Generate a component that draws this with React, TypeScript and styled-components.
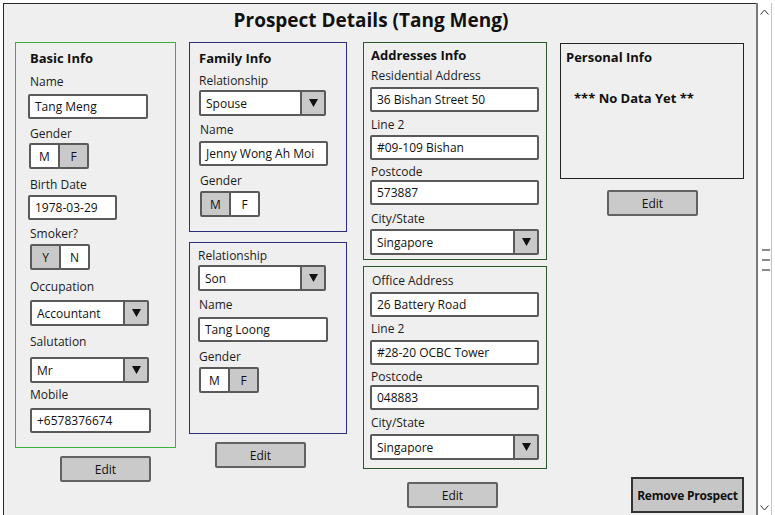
import React from "react";
import styled, { createGlobalStyle } from "styled-components";

const GlobalStyle = createGlobalStyle`
  html, body { margin: 0; padding: 0; background: #ffffff; }
  body {
    font-family: "Open Sans", "DejaVu Sans", sans-serif;
    color: #1c1c1c;
    overflow: hidden;
  }
  * { box-sizing: border-box; }
`;

const Window = styled.div`
  margin: 3px 0 0 3px;
  width: 769px;
  height: 512px;
  display: flex;
  border-top: 1px solid #2b2b2b;
  border-left: 1px solid #2b2b2b;
  background: #efefef;
`;

const Main = styled.div`
  flex: 1;
  min-width: 0;
  display: flex;
  flex-direction: column;
`;

const Title = styled.h1`
  margin: 4px 18px 0 0;
  font-size: 19px;
  line-height: 24px;
  font-weight: 700;
  text-align: center;
  color: #111;
`;

const Columns = styled.div`
  display: flex;
  align-items: flex-start;
  margin-top: 10px;
  padding-left: 11px;
`;

const Column = styled.div<{ $w: number; $ml?: number; $mt?: number }>`
  flex: none;
  width: ${(p) => p.$w}px;
  margin-left: ${(p) => p.$ml ?? 0}px;
  margin-top: ${(p) => p.$mt ?? 0}px;
  display: flex;
  flex-direction: column;
  align-items: flex-start;
`;

const Panel = styled.section<{
  $color: string;
  $h?: number;
  $pt: number;
  $pl: number;
  $pb?: number;
  $mt?: number;
}>`
  width: 100%;
  height: ${(p) => (p.$h ? `${p.$h}px` : "auto")};
  margin-top: ${(p) => p.$mt ?? 0}px;
  border: 1px solid ${(p) => p.$color};
  padding: ${(p) => p.$pt}px 0 ${(p) => p.$pb ?? 0}px ${(p) => p.$pl}px;
  display: flex;
  flex-direction: column;
  align-items: flex-start;
`;

const Heading = styled.h2<{ $indent?: number }>`
  margin: 0;
  padding-left: ${(p) => p.$indent ?? 0}px;
  font-size: 13px;
  line-height: 16px;
  font-weight: 700;
  color: #111;
`;

const Field = styled.div<{ $mt: number; $lg: number }>`
  margin-top: ${(p) => p.$mt}px;
  display: flex;
  flex-direction: column;
  align-items: flex-start;
  gap: ${(p) => p.$lg}px;
`;

const Label = styled.div<{ $indent?: number }>`
  padding-left: ${(p) => p.$indent ?? 0}px;
  font-size: 12px;
  line-height: 16px;
  color: #1c1c1c;
`;

const TextBox = styled.div<{ $w: number; $indent?: number }>`
  width: ${(p) => p.$w}px;
  height: 25px;
  margin-left: ${(p) => p.$indent ?? 0}px;
  background: #ffffff;
  border: 2px solid #5a5a5a;
  border-radius: 2px;
  padding-left: 5px;
  display: flex;
  align-items: center;
  font-size: 12px;
  color: #111;
  white-space: nowrap;
`;

const SelectBox = styled.div<{ $w: number; $indent?: number }>`
  width: ${(p) => p.$w}px;
  height: 26px;
  margin-left: ${(p) => p.$indent ?? 0}px;
  background: #ffffff;
  border: 2px solid #5a5a5a;
  border-radius: 2px;
  display: flex;
  align-items: stretch;
  font-size: 12px;
  color: #111;
`;

const SelectValue = styled.div`
  flex: 1;
  padding-left: 5px;
  display: flex;
  align-items: center;
  white-space: nowrap;
`;

const SelectArrow = styled.div`
  flex: none;
  width: 24px;
  background: #c9c9c9;
  border-left: 2px solid #5a5a5a;
  display: flex;
  align-items: center;
  justify-content: center;
`;

const ToggleGroup = styled.div<{ $indent?: number }>`
  display: flex;
  margin-left: ${(p) => p.$indent ?? 0}px;
`;

const ToggleBtn = styled.div<{ $on: boolean }>`
  width: 31px;
  height: 26px;
  border: 2px solid #5a5a5a;
  border-radius: 2px;
  background: ${(p) => (p.$on ? "#c9c9c9" : "#ffffff")};
  display: flex;
  align-items: center;
  justify-content: center;
  font-size: 12px;
  color: #111;
  & + & {
    margin-left: -2px;
  }
`;

const EmptyNote = styled.div<{ $mt: number; $indent: number }>`
  margin-top: ${(p) => p.$mt}px;
  padding-left: ${(p) => p.$indent}px;
  font-size: 13px;
  line-height: 16px;
  font-weight: 700;
  color: #111;
`;

const Button = styled.button<{ $ml: number; $mt: number }>`
  width: 91px;
  height: 26px;
  margin: ${(p) => p.$mt}px 0 0 ${(p) => p.$ml}px;
  padding: 0;
  background: #cacaca;
  border: 2px solid #626262;
  border-radius: 2px;
  font-family: inherit;
  font-size: 12px;
  color: #111;
`;

const DangerButton = styled.button`
  width: 113px;
  height: 36px;
  margin: 261px 0 0 71px;
  padding: 0;
  background: #c6c6c6;
  border: 2px solid #333333;
  font-family: inherit;
  font-size: 12px;
  font-weight: 700;
  letter-spacing: -0.2px;
  color: #111;
`;

const Scrollbar = styled.div`
  flex: none;
  width: 16px;
  margin-top: -1px;
  background: #ffffff;
  border-left: 2px solid #7a7a7a;
  border-right: 1px solid #c4c4c4;
  display: flex;
  flex-direction: column;
  align-items: center;
  justify-content: space-between;
  padding: 6px 0 4px;
`;

const Grip = styled.div`
  display: flex;
  flex-direction: column;
  gap: 8px;
  margin-left: 2px;
`;

const GripLine = styled.div`
  width: 8px;
  height: 2px;
  background: #8a8a8a;
`;

const Arrow = () => (
  <svg width="9" height="8" viewBox="0 0 9 8">
    <polygon points="0,0 9,0 4.5,8" fill="#111" />
  </svg>
);

const Chevron = ({ up }: { up?: boolean }) => (
  <svg width="9" height="6" viewBox="0 0 9 6">
    <polyline
      points={up ? "0.5,5.5 4.5,1 8.5,5.5" : "0.5,0.5 4.5,5 8.5,0.5"}
      fill="none"
      stroke="#333"
      strokeWidth="1"
    />
  </svg>
);

const Select = ({ value, w, indent }: { value: string; w: number; indent?: number }) => (
  <SelectBox $w={w} $indent={indent}>
    <SelectValue>{value}</SelectValue>
    <SelectArrow>
      <Arrow />
    </SelectArrow>
  </SelectBox>
);

const Toggle = ({ a, b, on, indent }: { a: string; b: string; on: 0 | 1; indent?: number }) => (
  <ToggleGroup $indent={indent}>
    <ToggleBtn $on={on === 0}>{a}</ToggleBtn>
    <ToggleBtn $on={on === 1}>{b}</ToggleBtn>
  </ToggleGroup>
);

const BLUE = "#2d2d78";
const GREEN = "#3bb03b";
const DARK_GREEN = "#2c572c";

export default function App() {
  return (
    <>
      <GlobalStyle />
      <Window>
        <Main>
          <Title>Prospect Details (Tang Meng)</Title>
          <Columns>
            <Column $w={161}>
              <Panel $color={GREEN} $pt={7} $pl={12} $pb={14}>
                <Heading $indent={2}>Basic Info</Heading>
                <Field $mt={8} $lg={4}>
                  <Label $indent={2}>Name</Label>
                  <TextBox $w={120}>Tang Meng</TextBox>
                </Field>
                <Field $mt={7} $lg={1}>
                  <Label $indent={2}>Gender</Label>
                  <Toggle a="M" b="F" on={1} indent={1} />
                </Field>
                <Field $mt={8} $lg={2}>
                  <Label $indent={2}>Birth Date</Label>
                  <TextBox $w={89}>1978-03-29</TextBox>
                </Field>
                <Field $mt={6} $lg={2}>
                  <Label $indent={2}>Smoker?</Label>
                  <Toggle a="Y" b="N" on={0} indent={2} />
                </Field>
                <Field $mt={9} $lg={5}>
                  <Label $indent={2}>Occupation</Label>
                  <Select value="Accountant" w={119} indent={2} />
                </Field>
                <Field $mt={8} $lg={7}>
                  <Label $indent={2}>Salutation</Label>
                  <Select value="Mr" w={119} indent={2} />
                </Field>
                <Field $mt={4} $lg={5}>
                  <Label $indent={2}>Mobile</Label>
                  <TextBox $w={121} $indent={2}>+6578376674</TextBox>
                </Field>
              </Panel>
              <Button $ml={45} $mt={8}>Edit</Button>
            </Column>

            <Column $w={158} $ml={13}>
              <Panel $color={BLUE} $h={190} $pt={7} $pl={9}>
                <Heading>Family Info</Heading>
                <Field $mt={7} $lg={1}>
                  <Label>Relationship</Label>
                  <Select value="Spouse" w={127} />
                </Field>
                <Field $mt={6} $lg={3}>
                  <Label $indent={1}>Name</Label>
                  <TextBox $w={129}>Jenny Wong Ah Moi</TextBox>
                </Field>
                <Field $mt={7} $lg={2}>
                  <Label $indent={1}>Gender</Label>
                  <Toggle a="M" b="F" on={0} indent={1} />
                </Field>
              </Panel>
              <Panel $color={BLUE} $h={192} $mt={10} $pt={5} $pl={8}>
                <Field $mt={0} $lg={1}>
                  <Label>Relationship</Label>
                  <Select value="Son" w={128} />
                </Field>
                <Field $mt={6} $lg={4}>
                  <Label $indent={1}>Name</Label>
                  <TextBox $w={130}>Tang Loong</TextBox>
                </Field>
                <Field $mt={7} $lg={2}>
                  <Label $indent={1}>Gender</Label>
                  <Toggle a="M" b="F" on={1} indent={1} />
                </Field>
              </Panel>
              <Button $ml={26} $mt={8}>Edit</Button>
            </Column>

            <Column $w={184} $ml={16}>
              <Panel $color={DARK_GREEN} $pt={4} $pl={6} $pb={4}>
                <Heading $indent={1}>Addresses Info</Heading>
                <Field $mt={5} $lg={3}>
                  <Label $indent={1}>Residential Address</Label>
                  <TextBox $w={169}>36 Bishan Street 50</TextBox>
                </Field>
                <Field $mt={5} $lg={2}>
                  <Label $indent={1}>Line 2</Label>
                  <TextBox $w={169}>#09-109 Bishan</TextBox>
                </Field>
                <Field $mt={4} $lg={0}>
                  <Label $indent={1}>Postcode</Label>
                  <TextBox $w={169}>573887</TextBox>
                </Field>
                <Field $mt={6} $lg={2}>
                  <Label $indent={1}>City/State</Label>
                  <Select value="Singapore" w={169} />
                </Field>
              </Panel>
              <Panel $color={DARK_GREEN} $mt={6} $pt={6} $pl={6} $pb={8}>
                <Field $mt={0} $lg={3}>
                  <Label $indent={2}>Office Address</Label>
                  <TextBox $w={169}>26 Battery Road</TextBox>
                </Field>
                <Field $mt={4} $lg={3}>
                  <Label $indent={1}>Line 2</Label>
                  <TextBox $w={169}>#28-20 OCBC Tower</TextBox>
                </Field>
                <Field $mt={4} $lg={0}>
                  <Label $indent={1}>Postcode</Label>
                  <TextBox $w={169}>048883</TextBox>
                </Field>
                <Field $mt={5} $lg={3}>
                  <Label $indent={1}>City/State</Label>
                  <Select value="Singapore" w={169} />
                </Field>
              </Panel>
              <Button $ml={44} $mt={13}>Edit</Button>
            </Column>

            <Column $w={184} $ml={13} $mt={1}>
              <Panel $color="#222222" $h={136} $pt={5} $pl={5}>
                <Heading>Personal Info</Heading>
                <EmptyNote $mt={25} $indent={8}>*** No Data Yet **</EmptyNote>
              </Panel>
              <Button $ml={47} $mt={11}>Edit</Button>
              <DangerButton>Remove Prospect</DangerButton>
            </Column>
          </Columns>
        </Main>
        <Scrollbar>
          <Chevron up />
          <Grip>
            <GripLine />
            <GripLine />
            <GripLine />
          </Grip>
          <Chevron />
        </Scrollbar>
      </Window>
    </>
  );
}
